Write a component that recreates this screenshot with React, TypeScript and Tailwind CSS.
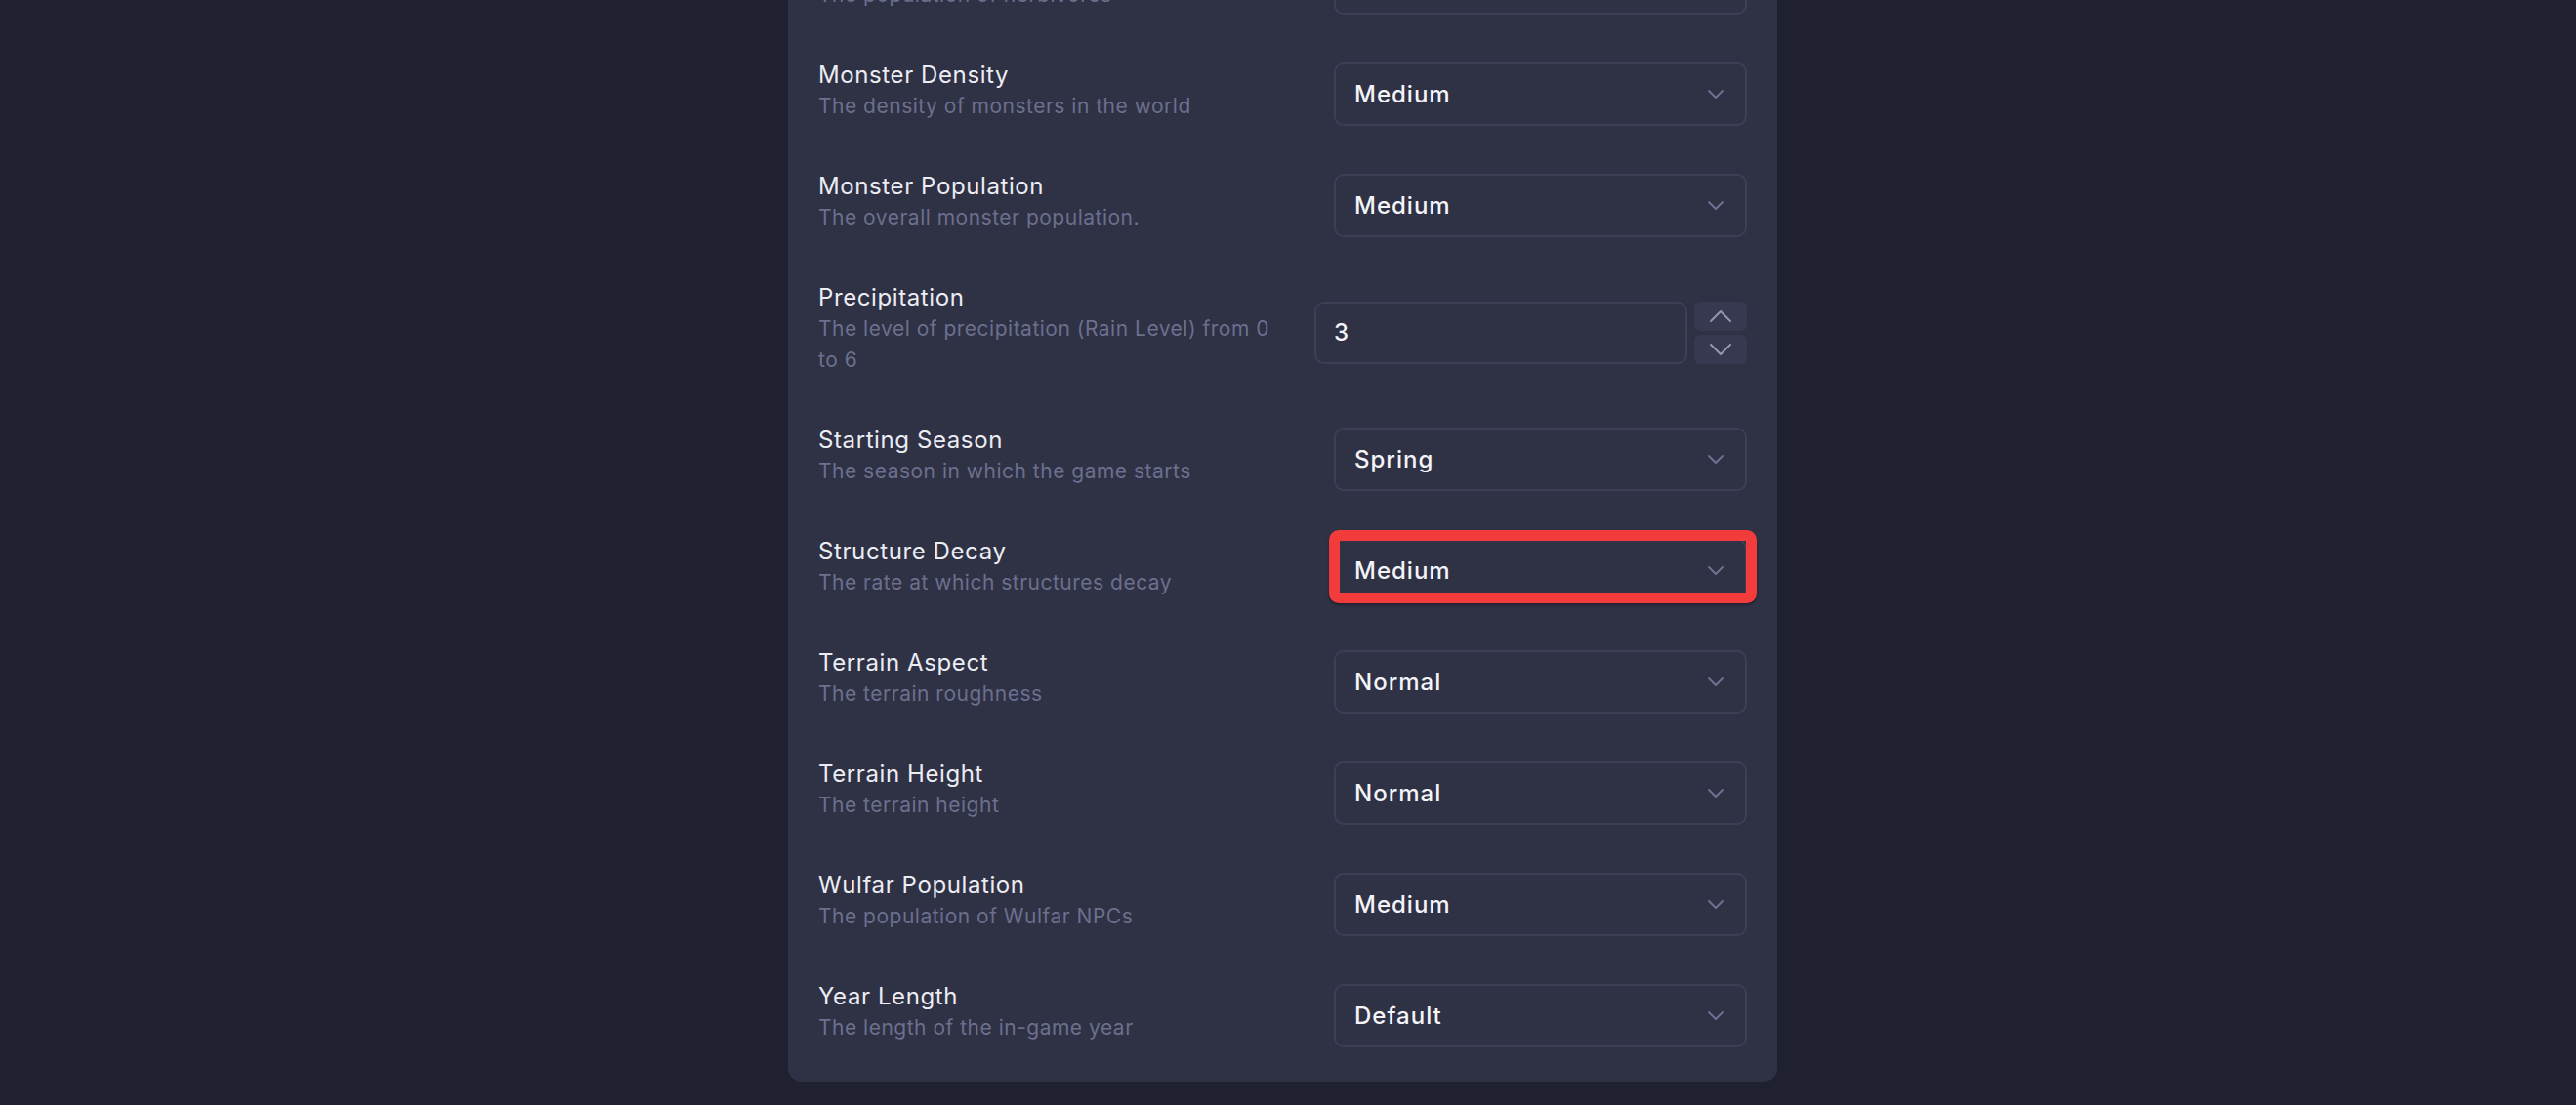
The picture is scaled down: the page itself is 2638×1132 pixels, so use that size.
type Setting = {
  title: string;
  description: string;
  value: string;
  kind?: "select" | "number";
  highlight?: boolean;
};

const settings: Setting[] = [
  { title: "Herbivore Population", description: "The population of herbivores", value: "Medium" },
  { title: "Monster Density", description: "The density of monsters in the world", value: "Medium" },
  { title: "Monster Population", description: "The overall monster population.", value: "Medium" },
  {
    title: "Precipitation",
    description: "The level of precipitation (Rain Level) from 0 to 6",
    value: "3",
    kind: "number",
  },
  { title: "Starting Season", description: "The season in which the game starts", value: "Spring" },
  {
    title: "Structure Decay",
    description: "The rate at which structures decay",
    value: "Medium",
    highlight: true,
  },
  { title: "Terrain Aspect", description: "The terrain roughness", value: "Normal" },
  { title: "Terrain Height", description: "The terrain height", value: "Normal" },
  { title: "Wulfar Population", description: "The population of Wulfar NPCs", value: "Medium" },
  { title: "Year Length", description: "The length of the in-game year", value: "Default" },
];

// simple open chevron, w x h in px
const Chevron = ({ up, w, h, className }: { up?: boolean; w: number; h: number; className?: string }) => (
  <svg width={w + 4} height={h + 4} viewBox={`0 0 ${w + 4} ${h + 4}`} className={className} fill="none">
    <path
      d={up ? `M2 ${h + 2} L${w / 2 + 2} 2 L${w + 2} ${h + 2}` : `M2 2 L${w / 2 + 2} ${h + 2} L${w + 2} 2`}
      stroke="currentColor"
      strokeWidth={2}
      strokeLinecap="round"
      strokeLinejoin="round"
    />
  </svg>
);

const SelectBox = ({ value, highlight }: { value: string; highlight?: boolean }) => (
  <div className="relative ml-auto">
    <div className="flex h-[65px] w-[423px] items-center justify-between rounded-[10px] border-2 border-[#3c3f56] bg-[#2f3145] pl-[19px] pr-[21px]">
      <span className="text-[24px] font-medium tracking-[1px] text-[#f4f4f8]">{value}</span>
      <Chevron w={14} h={7} className="text-[#6e7191]" />
    </div>
    {highlight && (
      <div className="pointer-events-none absolute -bottom-[1px] -left-[5px] -right-[10px] -top-[9px] rounded-[10px] border-[11px] border-[#f23c3c] shadow-[0_2px_3px_rgba(0,0,0,0.35)]" />
    )}
  </div>
);

const NumberBox = ({ value }: { value: string }) => (
  <div className="ml-auto flex w-[443px] items-stretch gap-[7px]">
    <div className="flex h-[64px] flex-1 items-center rounded-[10px] border-2 border-[#3c3f56] bg-[#2f3145] pl-[18px]">
      <span className="text-[24px] font-medium text-[#f4f4f8]">{value}</span>
    </div>
    <div className="flex w-[54px] flex-col justify-between">
      <button className="flex h-[30px] items-center justify-center rounded-[6px] bg-[#363950] text-[#9497b2]">
        <Chevron up w={20} h={10} />
      </button>
      <button className="flex h-[30px] items-center justify-center rounded-[6px] bg-[#363950] text-[#9497b2]">
        <Chevron w={20} h={10} />
      </button>
    </div>
  </div>
);

export default function App() {
  return (
    <div
      className="h-screen overflow-hidden bg-[#1f2131] pr-[11px]"
      style={{ fontFamily: "Inter, 'Noto Sans', sans-serif" }}
    >
      <div className="mx-auto -mt-[54px] flex w-[1013px] flex-col gap-[41px] rounded-b-[14px] bg-[#2f3145] px-[31px] pb-[31px]">
        {settings.map((s) => (
          <div key={s.title} className="flex items-center">
            <div className="w-1/2 pb-2">
              <div className="text-[24px] leading-[33px] tracking-[0.6px] text-[#ececf3]">{s.title}</div>
              <div className="text-[21px] leading-[32px] tracking-[0.5px] text-[#6c6f8d]">{s.description}</div>
            </div>
            {s.kind === "number" ? (
              <NumberBox value={s.value} />
            ) : (
              <SelectBox value={s.value} highlight={s.highlight} />
            )}
          </div>
        ))}
      </div>
    </div>
  );
}
